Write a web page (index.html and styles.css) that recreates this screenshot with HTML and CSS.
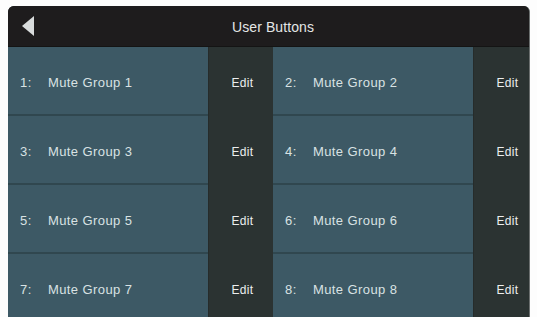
FILE: index.html
```html
<!DOCTYPE html>
<html lang="en">

<head>
    <meta charset="UTF-8">
    <meta name="viewport" content="width=device-width, initial-scale=1.0">
    <title>User Buttons</title>

    <link rel="stylesheet" href="styles.css">
</head>

<body>
    <main class="screen">
        <header class="topbar">
            <svg class="back" width="14" height="22" viewBox="0 0 14 22">
                <polygon points="13,1 13,21 1,11" fill="#d9dcdc" />
            </svg>
            <h1>User Buttons</h1>
        </header>

        <div class="grid">
            <div class="btn"><span class="num">1:</span>Mute Group 1</div>
            <div class="edit">Edit</div>
            <div class="btn"><span class="num">2:</span>Mute Group 2</div>
            <div class="edit">Edit</div>

            <div class="btn"><span class="num">3:</span>Mute Group 3</div>
            <div class="edit">Edit</div>
            <div class="btn"><span class="num">4:</span>Mute Group 4</div>
            <div class="edit">Edit</div>

            <div class="btn"><span class="num">5:</span>Mute Group 5</div>
            <div class="edit">Edit</div>
            <div class="btn"><span class="num">6:</span>Mute Group 6</div>
            <div class="edit">Edit</div>

            <div class="btn"><span class="num">7:</span>Mute Group 7</div>
            <div class="edit">Edit</div>
            <div class="btn"><span class="num">8:</span>Mute Group 8</div>
            <div class="edit">Edit</div>
        </div>
    </main>
</body>

</html>
```

FILE: styles.css
```css
*,
html {
    margin: 0;
    padding: 0;
    box-sizing: border-box;
}

body {
    background: #fdfdfd;
    font-family: "Liberation Sans", Arial, sans-serif;
    overflow: hidden;
    height: 317px;
}

.screen {
    margin: 6px 7px 0 8px;
    height: 311px;
    background: #2b3332;
    border-radius: 6px 6px 0 0;
    overflow: hidden;
    border-right: 1px solid #6b6f6f;
}

.topbar {
    height: 41px;
    background: #1e1c1d;
    border-bottom: 1px solid #141414;
    display: flex;
    align-items: center;
    position: relative;
    width: 530px;
}

.back {
    margin-left: 13px;
}

.topbar h1 {
    position: absolute;
    left: 0;
    right: 0;
    padding-top: 2px;
    text-align: center;
    font-size: 14px;
    font-weight: normal;
    color: #e4e6e6;
    letter-spacing: 0.1px;
}

.grid {
    display: grid;
    grid-template-columns: 200px 65px 200px 65px;
    grid-auto-rows: 69px;
    width: 530px;
}

.btn {
    background: #3d5965;
    border-bottom: 2px solid #30474f;
    display: flex;
    align-items: center;
    padding: 3px 0 0 12px;
    font-size: 13px;
    color: #d9e2e3;
    letter-spacing: 0.4px;
}

.num {
    width: 28px;
}

.edit {
    background: #2b3332;
    border-left: 1px solid #262c2b;
    display: flex;
    align-items: center;
    justify-content: center;
    font-size: 12px;
    color: #eceeee;
    letter-spacing: 0.3px;
    padding: 3px 0 0 3px;
}
```
